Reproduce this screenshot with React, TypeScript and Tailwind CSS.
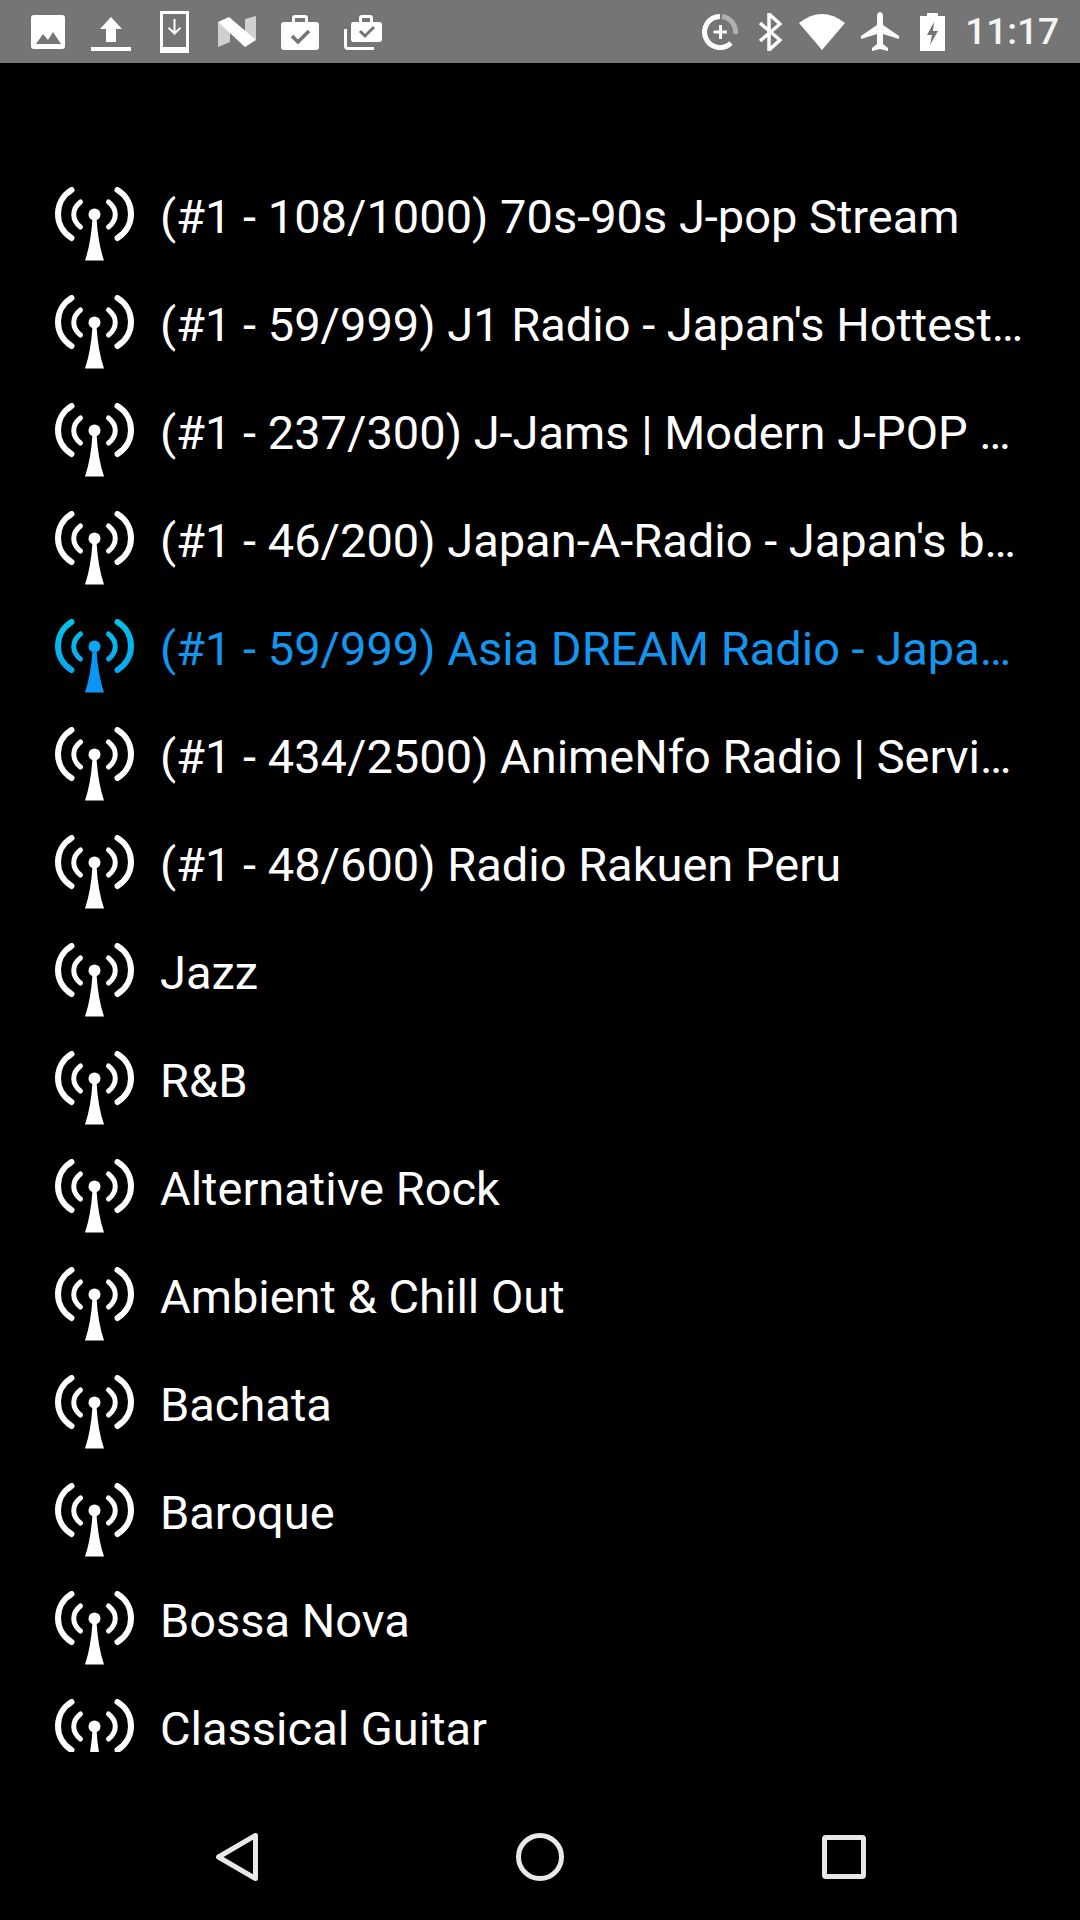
const stations = [
  "(#1 - 108/1000) 70s-90s J-pop Stream",
  "(#1 - 59/999) J1 Radio - Japan's Hottest…",
  "(#1 - 237/300) J-Jams | Modern J-POP …",
  "(#1 - 46/200) Japan-A-Radio - Japan's b…",
  "(#1 - 59/999) Asia DREAM Radio - Japa…",
  "(#1 - 434/2500) AnimeNfo Radio | Servi…",
  "(#1 - 48/600) Radio Rakuen Peru",
  "Jazz",
  "R&B",
  "Alternative Rock",
  "Ambient & Chill Out",
  "Bachata",
  "Baroque",
  "Bossa Nova",
  "Classical Guitar",
];

const ACTIVE = 4;

const Antenna = ({ active }: { active: boolean }) => {
  const arcs = active ? "url(#antenna-top)" : "#fff";
  const tower = active ? "#0a96f5" : "#fff";
  return (
    <svg width="80" height="74" viewBox="0 0 80 74" className="shrink-0 self-start mt-[23px]">
      {active && (
        <defs>
          <linearGradient id="antenna-top" x1="0" y1="0" x2="0" y2="54" gradientUnits="userSpaceOnUse">
            <stop offset="0" stopColor="#00c4e8" />
            <stop offset="1" stopColor="#0aa6f0" />
          </linearGradient>
        </defs>
      )}
      <g fill="none" stroke={arcs} strokeLinecap="round">
        <path strokeWidth="6" d="M16.5 3 C-1.5 14 -1.5 40 16.5 51" />
        <path strokeWidth="6" d="M62.5 3 C80.5 14 80.5 40 62.5 51" />
        <path strokeWidth="5" d="M25.5 15 C16.5 22 16.5 33 25.5 40" />
        <path strokeWidth="5" d="M53.5 15 C62.5 22 62.5 33 53.5 40" />
      </g>
      <circle cx="39.5" cy="27.5" r="6" fill={active ? "#0aa6f0" : "#fff"} />
      <path d="M37.5 31 H41.5 Q43 56 49 73.5 H30 Q36 56 37.5 31 Z" fill={tower} />
    </svg>
  );
};

const StatusLeft = () => (
  <div className="flex items-center">
    {/* picture */}
    <svg width="34" height="34" viewBox="0 0 34 34" className="ml-[31px]">
      <rect width="34" height="34" rx="3" fill="#fff" />
      <path d="M5 29 L12 19 L17 25 L22 17 L30 29 Z" fill="#757575" />
    </svg>
    {/* upload */}
    <svg width="40" height="36" viewBox="0 0 40 36" className="ml-[26px] mt-[4px]">
      <path d="M20 1 L31 13 H25 V26 H15 V13 H9 Z" fill="#fff" />
      <rect x="0" y="31" width="40" height="4" fill="#fff" />
    </svg>
    {/* download to device */}
    <svg width="29" height="42" viewBox="0 0 29 42" className="ml-[29px]">
      <path fillRule="evenodd" d="M0 0 H29 V42 H0 Z M3 3 V36 H26 V3 Z" fill="#fff" />
      <path d="M13.5 8 H15.5 V20 L20 16 L21 17.5 L14.5 24 L8 17.5 L9 16 L13.5 20 Z" fill="#fff" />
    </svg>
    {/* nougat logo */}
    <svg width="38" height="32" viewBox="0 0 38 32" className="ml-[29px] mt-[1px]">
      <path d="M0 6 L0 31 L12 26 V12 Z" fill="#d0d0d0" />
      <path d="M38 0 V24 L27 20 V3 Z" fill="#d0d0d0" />
      <path d="M0 6 L11 1 L38 24 L27 31 Z" fill="#fff" />
    </svg>
    {/* work check */}
    <svg width="38" height="36" viewBox="0 0 38 36" className="ml-[25px]">
      <path fillRule="evenodd" d="M3 8 H11 V4 Q11 1 14 1 H24 Q27 1 27 4 V8 H35 Q38 8 38 11 V33 Q38 36 35 36 H3 Q0 36 0 33 V11 Q0 8 3 8 Z M14 4 V8 H24 V4 Z" fill="#fff" />
      <path d="M11 22 L17 28 L28 17" fill="none" stroke="#757575" strokeWidth="3.5" />
    </svg>
    {/* work check stack */}
    <svg width="38" height="36" viewBox="0 0 38 36" className="ml-[25px]">
      <path fillRule="evenodd" d="M9 8 H15 V4 Q15 1 18 1 H26 Q29 1 29 4 V8 H35 Q38 8 38 11 V25 Q38 28 35 28 H9 Q7 28 7 25 V11 Q7 8 9 8 Z M18 4 V8 H26 V4 Z" fill="#fff" />
      <path d="M16 17 L21 22 L30 13" fill="none" stroke="#757575" strokeWidth="3" />
      <path d="M1.5 15 V32 Q1.5 34.5 4 34.5 H30" fill="none" stroke="#fff" strokeWidth="3" />
    </svg>
  </div>
);

const StatusRight = () => (
  <div className="flex items-center">
    {/* data saver */}
    <svg width="37" height="38" viewBox="0 0 37 38" className="mr-[19px]">
      <path d="M18 3.5 A15.5 15.5 0 1 0 29 30" fill="none" stroke="#fff" strokeWidth="5" />
      <path d="M20 3.6 A15.5 15.5 0 0 1 33.4 21" fill="none" stroke="#b0b0b0" strokeWidth="5" />
      <path d="M17 12 H20 V17.5 H25 V20.5 H20 V26 H17 V20.5 H11.5 V17.5 H17 Z" fill="#fff" />
    </svg>
    {/* bluetooth */}
    <svg width="24" height="38" viewBox="0 0 24 38" className="mr-[17px]">
      <path d="M2 10 L22 27 L11 37 V1 L22 11 L2 28" fill="none" stroke="#fff" strokeWidth="3.5" />
    </svg>
    {/* wifi */}
    <svg width="46" height="37" viewBox="0 0 46 37" className="mr-[16px]">
      <path d="M0 10 Q23 -8 46 10 L23 37 Z" fill="#fff" />
    </svg>
    {/* airplane */}
    <svg width="38" height="39" viewBox="0 0 38 39" className="mr-[21px]">
      <path d="M19 0 Q22 0 22 5 V13 L38 24 V27 L22 22 V32 L27 36 V39 L19 37 L11 39 V36 L16 32 V22 L0 27 V24 L16 13 V5 Q16 0 19 0 Z" fill="#fff" />
    </svg>
    {/* battery charging */}
    <svg width="25" height="38" viewBox="0 0 25 38" className="mr-[20px]">
      <path fillRule="evenodd" d="M7 3 V0 H18 V3 H25 V38 H0 V3 Z M14 9 L7 22 H12 L10 32 L18 18 H13 Z" fill="#fff" />
    </svg>
    <span className="mr-[21px] text-[37px] leading-none font-medium text-[#f5f5f5] font-['Roboto',sans-serif]">11:17</span>
  </div>
);

export default function App() {
  return (
    <div className="flex flex-col w-[1080px] h-[1920px] bg-black overflow-hidden font-['Roboto',sans-serif]">
      <div className="flex items-center justify-between h-[63px] shrink-0 bg-[#757575]">
        <StatusLeft />
        <StatusRight />
      </div>

      <ul className="flex-1 min-h-0 pt-[101px] overflow-hidden">
        {stations.map((name, i) => (
          <li key={i} className="flex items-center h-[108px] pl-[55px]">
            <Antenna active={i === ACTIVE} />
            <span
              className={`ml-[25px] mb-[4px] text-[47px] leading-none whitespace-nowrap ${
                i === ACTIVE ? "text-[#1296f0]" : "text-white"
              }`}
            >
              {name}
            </span>
          </li>
        ))}
      </ul>

      <div className="flex items-center h-[168px] shrink-0 pt-[42px] pl-[216px] gap-[258px] bg-black">
        <svg width="42" height="48" viewBox="0 0 42 48">
          <path d="M39.5 2.5 V45.5 L2.5 24 Z" fill="none" stroke="#e8e8e8" strokeWidth="5" strokeLinejoin="round" />
        </svg>
        <svg width="48" height="48" viewBox="0 0 48 48">
          <circle cx="24" cy="24" r="21.5" fill="none" stroke="#e8e8e8" strokeWidth="5" />
        </svg>
        <svg width="44" height="44" viewBox="0 0 44 44">
          <rect x="2.5" y="2.5" width="39" height="39" rx="1.5" fill="none" stroke="#e8e8e8" strokeWidth="5" />
        </svg>
      </div>
    </div>
  );
}
